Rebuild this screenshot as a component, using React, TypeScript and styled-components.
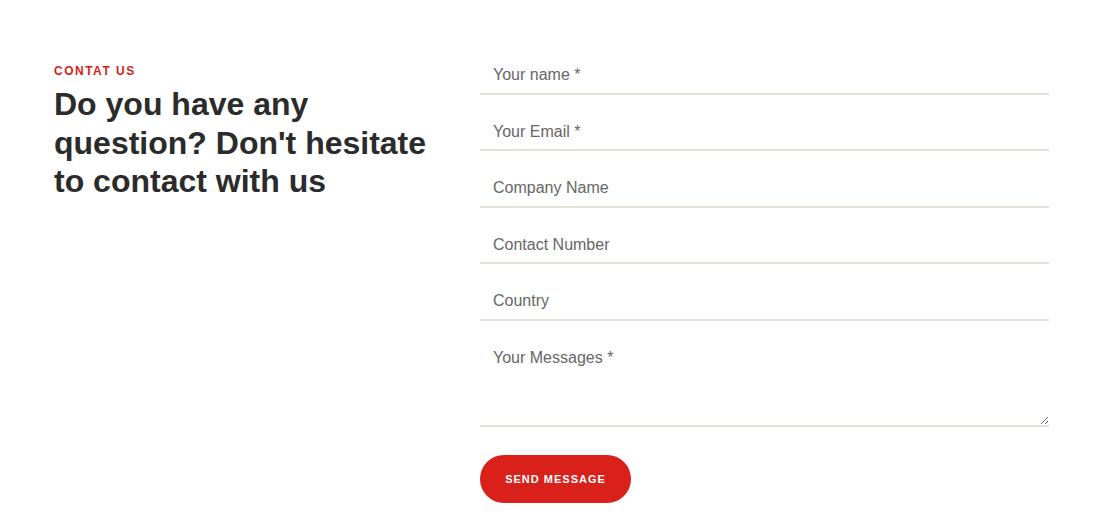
import styled, { createGlobalStyle } from "styled-components";

const GlobalStyle = createGlobalStyle`
  * {
    box-sizing: border-box;
  }

  body {
    margin: 0;
    background: #ffffff;
    font-family: "Liberation Sans", Arial, sans-serif;
  }
`;

const Section = styled.section`
  display: grid;
  grid-template-columns: 426px 569px;
  padding: 38px 0 0 54px;
  width: 1100px;
  height: 524px;
`;

const Intro = styled.div`
  display: flex;
  flex-direction: column;
  padding-top: 26px;
`;

const Label = styled.span`
  color: #d71f1a;
  font-size: 12px;
  font-weight: 700;
  letter-spacing: 1.5px;
  line-height: 14px;
`;

const Heading = styled.h2`
  margin: 7px 0 0;
  color: #2b2b2b;
  font-size: 32px;
  font-weight: 700;
  line-height: 38.5px;
`;

const Form = styled.form`
  display: flex;
  flex-direction: column;
  align-items: flex-start;
`;

const fieldStyle = `
  width: 100%;
  border: none;
  border-bottom: 2px solid #e5e1da;
  padding: 27px 13px 7.5px;
  font-family: "Liberation Sans", Arial, sans-serif;
  font-size: 16px;
  line-height: 20px;
  color: #333333;
  background: transparent;
  outline: none;

  &::placeholder {
    color: #666666;
  }
`;

const Input = styled.input`
  ${fieldStyle}
`;

const TextArea = styled.textarea`
  ${fieldStyle}
  height: 106px;
  display: block;
`;

const SendButton = styled.button`
  margin-top: 28px;
  width: 151px;
  height: 48px;
  border: none;
  border-radius: 24px;
  background: #d9201a;
  color: #ffffff;
  font-family: "Liberation Sans", Arial, sans-serif;
  font-size: 11px;
  font-weight: 700;
  letter-spacing: 1px;
  cursor: pointer;
`;

const fields = [
  { name: "name", placeholder: "Your name *" },
  { name: "email", placeholder: "Your Email *" },
  { name: "company", placeholder: "Company Name" },
  { name: "phone", placeholder: "Contact Number" },
  { name: "country", placeholder: "Country" },
];

export default function App() {
  return (
    <>
      <GlobalStyle />
      <Section>
        <Intro>
          <Label>CONTAT US</Label>
          <Heading>
            Do you have any
            <br />
            question? Don't hesitate
            <br />
            to contact with us
          </Heading>
        </Intro>
        <Form onSubmit={(e) => e.preventDefault()}>
          {fields.map((field) => (
            <Input
              key={field.name}
              name={field.name}
              type="text"
              placeholder={field.placeholder}
              autoComplete="off"
            />
          ))}
          <TextArea name="message" placeholder="Your Messages *" />
          <SendButton type="submit">SEND MESSAGE</SendButton>
        </Form>
      </Section>
    </>
  );
}
